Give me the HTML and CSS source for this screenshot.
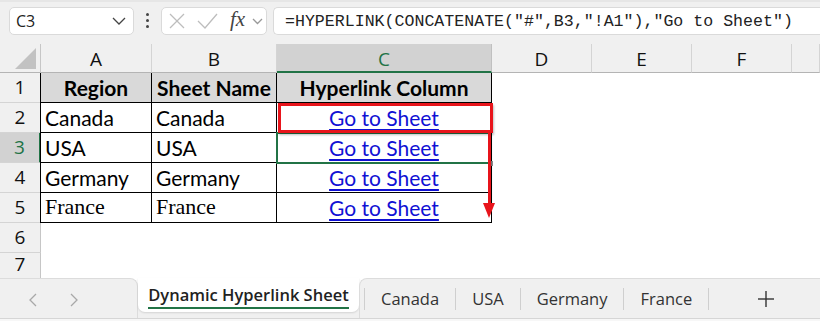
FILE: index.html
```html
<!DOCTYPE html>
<html>
	<head>
		<title>Dynamic Hyperlink Sheet</title>
		<link rel="stylesheet" href="styles.css">
	</head>
	<body>
		<div class="toolbar">
			<div class="namebox">
				<span>C3</span>
				<svg class="chev" width="14" height="8" viewBox="0 0 14 8"><polyline points="1,1 7,7 13,1" /></svg>
			</div>
			<div class="dots"><i></i><i></i><i></i></div>
			<div class="fxbox">
				<svg class="icon" width="16" height="16" viewBox="0 0 16 16"><line x1="1" y1="1" x2="15" y2="15" /><line x1="15" y1="1" x2="1" y2="15" /></svg>
				<svg class="icon check" width="21" height="16" viewBox="0 0 21 16"><polyline points="1,8 8,15 20,1" /></svg>
				<span class="fx">fx</span>
				<svg class="chev small" width="11" height="7" viewBox="0 0 11 7"><polyline points="1,1 5.5,5.5 10,1" /></svg>
			</div>
			<div class="formula">=HYPERLINK(CONCATENATE("#",B3,"!A1"),"Go to Sheet")</div>
		</div>

		<div class="sheet">
			<div class="grid">
				<div class="corner"><span class="tri"></span></div>
				<div class="colhead">A</div>
				<div class="colhead">B</div>
				<div class="colhead sel">C</div>
				<div class="colhead">D</div>
				<div class="colhead">E</div>
				<div class="colhead">F</div>
				<div class="colhead last"></div>

				<div class="rowhead">1</div>
				<div class="cell tb th">Region</div>
				<div class="cell tb th">Sheet Name</div>
				<div class="cell tb th">Hyperlink Column</div>
				<div class="cell"></div><div class="cell"></div><div class="cell"></div><div class="cell"></div>

				<div class="rowhead">2</div>
				<div class="cell tb">Canada</div>
				<div class="cell tb">Canada</div>
				<div class="cell tb link"><a href="#Canada!A1">Go to Sheet</a></div>
				<div class="cell"></div><div class="cell"></div><div class="cell"></div><div class="cell"></div>

				<div class="rowhead sel">3</div>
				<div class="cell tb">USA</div>
				<div class="cell tb">USA</div>
				<div class="cell tb link"><a href="#USA!A1">Go to Sheet</a></div>
				<div class="cell"></div><div class="cell"></div><div class="cell"></div><div class="cell"></div>

				<div class="rowhead">4</div>
				<div class="cell tb">Germany</div>
				<div class="cell tb">Germany</div>
				<div class="cell tb link"><a href="#Germany!A1">Go to Sheet</a></div>
				<div class="cell"></div><div class="cell"></div><div class="cell"></div><div class="cell"></div>

				<div class="rowhead">5</div>
				<div class="cell tb serif">France</div>
				<div class="cell tb serif">France</div>
				<div class="cell tb link"><a href="#France!A1">Go to Sheet</a></div>
				<div class="cell"></div><div class="cell"></div><div class="cell"></div><div class="cell"></div>

				<div class="rowhead">6</div>
				<div class="cell"></div><div class="cell"></div><div class="cell"></div><div class="cell"></div><div class="cell"></div><div class="cell"></div><div class="cell"></div>

				<div class="rowhead partial">7</div>
				<div class="cell"></div><div class="cell"></div><div class="cell"></div><div class="cell"></div><div class="cell"></div><div class="cell"></div><div class="cell"></div>
			</div>
			<!-- active cell and the drawn markup on top of the grid -->
			<div class="selection"><span class="handle"></span></div>
			<div class="redbox"></div>
			<div class="redline"></div>
			<div class="redhead"></div>
		</div>

		<div class="tabbar">
			<div class="nav">
				<svg class="arrow" width="8" height="14" viewBox="0 0 8 14"><polyline points="7,1 1,7 7,13" /></svg>
				<svg class="arrow" width="8" height="14" viewBox="0 0 8 14"><polyline points="1,1 7,7 1,13" /></svg>
			</div>
			<div class="activewrap"><div class="tab active"><span>Dynamic Hyperlink Sheet</span></div></div>
			<div class="tabs">
				<span class="sep"></span>
				<div class="tab">Canada</div>
				<span class="sep"></span>
				<div class="tab">USA</div>
				<span class="sep"></span>
				<div class="tab">Germany</div>
				<span class="sep"></span>
				<div class="tab">France</div>
				<span class="sep"></span>
				<div class="add">
					<svg width="16" height="16" viewBox="0 0 16 16"><line x1="8" y1="0" x2="8" y2="16" /><line x1="0" y1="8" x2="16" y2="8" /></svg>
				</div>
			</div>
		</div>
		<div class="statusline"></div>
	</body>
</html>
```

FILE: styles.css
```css
body {
	margin: 0;
	padding: 0;
	width: 820px;
	height: 321px;
	overflow: hidden;
	background-color: white;
	font-family: "Open Sans", "Noto Sans", sans-serif;
}

/* formula bar */
.toolbar {
	height: 44px;
	box-sizing: border-box;
	background-color: #f0f0f0;
	border-top: 2px solid #e6e6e6;
	display: flex;
	align-items: flex-start;
	padding: 5px 0 0 9px;
	gap: 0;
}
.namebox, .fxbox, .formula {
	height: 28px;
	box-sizing: border-box;
	background-color: white;
	border: 1px solid #dadada;
	border-radius: 5px;
	display: flex;
	align-items: center;
}
.namebox {
	width: 125px;
	padding: 0 7px 0 6px;
	justify-content: space-between;
	font-size: 16px;
	color: #222;
}
.chev polyline, .arrow polyline {
	fill: none;
	stroke: #444;
	stroke-width: 1.3;
}
.chev.small polyline {
	stroke: #999;
}
.dots {
	width: 27px;
	display: flex;
	flex-direction: column;
	align-items: center;
	gap: 3px;
	padding-top: 6px;
}
.dots i {
	display: block;
	width: 3px;
	height: 3px;
	border-radius: 2px;
	background-color: #444;
}
.fxbox {
	width: 106px;
	padding: 0 2px 0 7px;
}
.icon line, .icon polyline {
	fill: none;
	stroke: #bdbdbd;
	stroke-width: 1.3;
}
.icon.check {
	margin-left: 12px;
}
.fx {
	margin-left: 12px;
	font-family: "Liberation Serif", serif;
	font-style: italic;
	font-size: 21px;
	color: #444;
	line-height: 1;
	margin-top: -3px;
}
.chev.small {
	margin-left: 7px;
}
.formula {
	margin-left: 6px;
	flex: 1;
	padding-left: 11px;
	border-right: 0;
	border-radius: 5px 0 0 5px;
	font-family: "Liberation Mono", monospace;
	font-size: 16.6px;
	color: #222;
	white-space: nowrap;
}

/* sheet grid */
.sheet {
	position: relative;
	height: 234px;
}
.grid {
	display: grid;
	grid-template-columns: 41px 111px 125px 215px 100px 100px 100px 1fr;
	grid-template-rows: 29px repeat(6, 30px) 25px;
}
.grid > div {
	box-sizing: border-box;
}
.corner {
	position: relative;
	background-color: #f0f0f0;
	border-right: 1px solid #c6c6c6;
	border-bottom: 1px solid #b4b4b4;
}
.tri {
	position: absolute;
	right: 4px;
	bottom: 3px;
	width: 0;
	height: 0;
	border-left: 21px solid transparent;
	border-bottom: 21px solid #c2c2c2;
}
.colhead {
	background-color: #f0f0f0;
	border-right: 1px solid #d4d4d4;
	border-bottom: 1px solid #b4b4b4;
	display: flex;
	align-items: center;
	justify-content: center;
	font-size: 19px;
	color: #111;
	padding-top: 2px;
}
.colhead.sel {
	background-color: #d2d2d2;
	color: #217346;
	border-bottom: 2px solid #217346;
	border-right-color: #c0c0c0;
}
.rowhead {
	background-color: #f0f0f0;
	border-right: 1px solid #c6c6c6;
	border-bottom: 1px solid #d4d4d4;
	display: flex;
	align-items: center;
	justify-content: center;
	font-size: 19px;
	line-height: 1;
	color: #111;
}
.rowhead.partial {
	align-items: flex-start;
	padding-top: 2px;
	border-bottom: 0;
}
.rowhead.sel {
	background-color: #d2d2d2;
	color: #217346;
	border-right: 2px solid #217346;
}
.cell {
	font-family: Lato, "Open Sans", sans-serif;
	font-size: 21px;
	color: black;
	padding: 0 4px;
	display: flex;
	align-items: flex-end;
	padding-bottom: 2px;
	white-space: nowrap;
}
.cell.tb {
	border-right: 1px solid black;
	border-bottom: 1px solid black;
}
.grid > .rowhead + .cell.tb {
	border-left: 1px solid black;
	margin-left: -1px;
}
.cell.th {
	background-color: #d9d9d9;
	font-weight: bold;
	justify-content: center;
}
.cell.serif {
	font-family: "Liberation Serif", serif;
	font-size: 22px;
}
.cell.link {
	justify-content: center;
}
.cell.link a {
	color: #1010d4;
	text-decoration: underline;
	text-decoration-thickness: 2px;
	text-underline-offset: 3px;
}

/* overlays */
.selection {
	position: absolute;
	left: 276px;
	top: 88px;
	width: 214px;
	height: 32px;
	box-sizing: border-box;
	border: 2px solid #217346;
}
.handle {
	position: absolute;
	right: -5px;
	bottom: -4px;
	width: 5px;
	height: 5px;
	background-color: #888;
}
.redbox {
	position: absolute;
	left: 278px;
	top: 59px;
	width: 215px;
	height: 30px;
	box-sizing: border-box;
	border: 3.5px solid #e8141b;
	box-shadow: 1px 2px 2px rgba(0, 0, 0, 0.25);
}
.redline {
	position: absolute;
	left: 488px;
	top: 89px;
	width: 3px;
	height: 72px;
	background-color: #e8141b;
	box-shadow: 1px 1px 1px rgba(0, 0, 0, 0.2);
}
.redhead {
	position: absolute;
	left: 483px;
	top: 159px;
	width: 0;
	height: 0;
	border-left: 6.5px solid transparent;
	border-right: 6.5px solid transparent;
	border-top: 15px solid #e8141b;
}

/* sheet tabs */
.tabbar {
	display: flex;
	height: 40px;
	background-color: white;
}
.nav {
	width: 138px;
	box-sizing: border-box;
	background-color: #f0f0f0;
	border-top: 1px solid #dcdcdc;
	border-right: 1px solid #dcdcdc;
	border-top-right-radius: 8px;
	display: flex;
	align-items: center;
	gap: 33px;
	padding: 2px 0 0 29px;
}
.arrow polyline {
	stroke: #a8a8a8;
}
.activewrap {
	width: 221px;
	background-color: #f0f0f0;
}
.tab {
	font-family: "Open Sans", "Noto Sans", sans-serif;
	font-size: 16.5px;
	color: #333;
	padding: 0 16px;
	display: flex;
	align-items: center;
}
.tab.active {
	height: 34px;
	background-color: white;
	border-radius: 0 0 7px 7px;
	box-shadow: 0 1px 2px rgba(0, 0, 0, 0.12);
	justify-content: center;
	padding: 0;
	color: #222;
	font-weight: 600;
	font-size: 16.5px;
}
.tab.active span {
	border-bottom: 2.5px solid #217346;
	line-height: 24px;
	padding-top: 2px;
}
.tabs {
	flex: 1;
	box-sizing: border-box;
	background-color: #f0f0f0;
	border-top: 1px solid #dcdcdc;
	border-left: 1px solid #dcdcdc;
	border-top-left-radius: 8px;
	display: flex;
	align-items: center;
	padding-left: 4px;
}
.sep {
	width: 1px;
	height: 22px;
	background-color: #cfcfcf;
}
.add {
	margin-left: 49px;
	display: flex;
}
.add line {
	stroke: #333;
	stroke-width: 1.4;
}
.statusline {
	height: 3px;
	border-top: 1px solid #d6d6d6;
	background-color: #f7f7f7;
}
```
